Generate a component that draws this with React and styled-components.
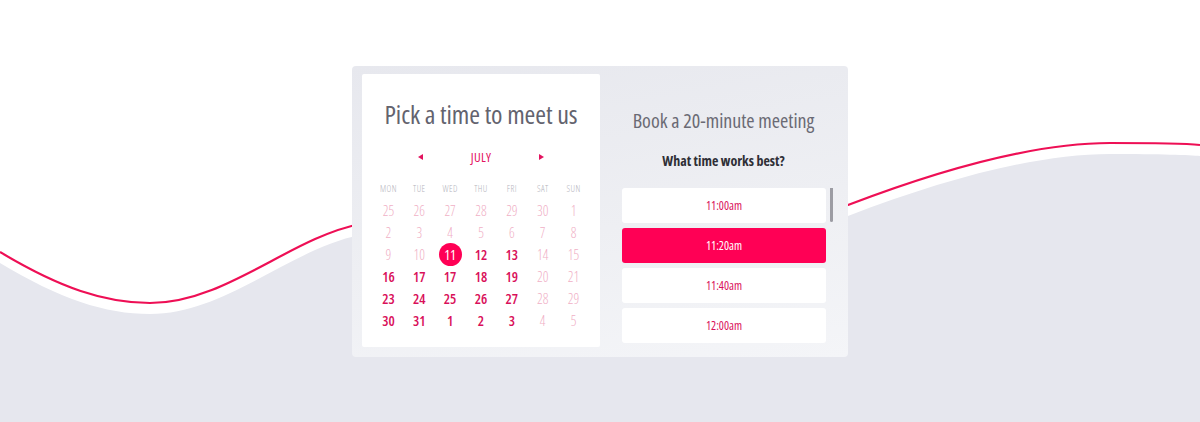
import React from 'react';
import styled, { createGlobalStyle } from 'styled-components';

const GlobalStyle = createGlobalStyle`
  html, body {
    margin: 0;
    padding: 0;
    background: #ffffff;
  }
  body {
    font-family: "Open Sans", "Noto Sans", sans-serif;
    font-stretch: 80%;
  }
`;

const Page = styled.div`
  position: relative;
  width: 100%;
  height: 422px;
  overflow: hidden;
  background: #ffffff;
`;

const Wave = styled.svg`
  position: absolute;
  left: 0;
  top: 0;
  width: 1200px;
  height: 422px;
`;

const Stage = styled.div`
  position: relative;
  z-index: 1;
  display: flex;
  justify-content: center;
  padding-top: 66px;
`;

const Card = styled.div`
  width: 496px;
  height: 291px;
  box-sizing: border-box;
  padding: 8px 10px 10px 10px;
  display: flex;
  border-radius: 4px;
  background: linear-gradient(170deg, #e7e8ee 0%, #eeeff3 55%, #f4f5f8 100%);
`;

const CalendarPanel = styled.div`
  width: 238px;
  flex: none;
  background: #ffffff;
  border-radius: 2px;
  padding: 25px 11px 0 11px;
  box-sizing: border-box;
`;

const Title = styled.h1`
  margin: 0;
  text-align: center;
  white-space: nowrap;
  font-size: 26px;
  line-height: 30px;
  font-weight: 400;
  color: #63636e;
  letter-spacing: -0.1px;
`;

const MonthRow = styled.div`
  display: flex;
  align-items: center;
  justify-content: space-between;
  margin: 18px 45px 0 45px;
  height: 20px;
`;

const Month = styled.span`
  font-size: 13px;
  color: #e3135f;
  letter-spacing: 0.3px;
`;

const Arrow = styled.span`
  width: 0;
  height: 0;
  border-top: 3px solid transparent;
  border-bottom: 3px solid transparent;
  ${({ $dir }) => ($dir === 'left'
    ? 'border-right: 5px solid #e3135f;'
    : 'border-left: 5px solid #e3135f;')}
`;

const Grid = styled.div`
  display: grid;
  grid-template-columns: repeat(7, 1fr);
  margin-top: 15px;
`;

const WeekDay = styled.div`
  text-align: center;
  font-size: 9px;
  line-height: 14px;
  font-weight: 300;
  color: #b4b4bc;
  letter-spacing: 0.4px;
  margin-bottom: 3px;
`;

const Day = styled.div`
  display: flex;
  align-items: center;
  justify-content: center;
  height: 22px;
  font-size: 14px;
  font-weight: ${({ $active }) => ($active ? 600 : 300)};
  color: ${({ $active }) => ($active ? '#d9105a' : '#f0b0c6')};
`;

const Selected = styled.span`
  width: 23px;
  height: 23px;
  border-radius: 50%;
  background: #ff0055;
  color: #ffffff;
  display: flex;
  align-items: center;
  justify-content: center;
  font-weight: 400;
`;

const BookPanel = styled.div`
  flex: 1;
  display: flex;
  flex-direction: column;
  padding-top: 35px;
`;

const BookTitle = styled.h2`
  margin: 0;
  padding-left: 9px;
  text-align: center;
  white-space: nowrap;
  font-size: 20px;
  line-height: 24px;
  font-weight: 400;
  color: #6a6a74;
`;

const Question = styled.h3`
  margin: 19px 0 0 0;
  padding-left: 9px;
  text-align: center;
  font-size: 14px;
  line-height: 18px;
  font-weight: 700;
  color: #2f2f36;
`;

const ListArea = styled.div`
  display: flex;
  gap: 4px;
  margin: 18px 0 0 22px;
  height: 155px;
  overflow: hidden;
`;

const Slots = styled.div`
  width: 204px;
  display: flex;
  flex-direction: column;
  gap: 5px;
`;

const Slot = styled.div`
  flex: none;
  height: 35px;
  border-radius: 3px;
  display: flex;
  align-items: center;
  justify-content: center;
  font-size: 12px;
  background: ${({ $selected }) => ($selected ? '#ff0055' : '#ffffff')};
  color: ${({ $selected }) => ($selected ? '#ffffff' : '#d9105a')};
`;

const ScrollThumb = styled.div`
  width: 3px;
  height: 35px;
  margin-top: -1px;
  border-radius: 2px;
  background: #9c9ca3;
`;

const weekDays = ['MON', 'TUE', 'WED', 'THU', 'FRI', 'SAT', 'SUN'];

const days = [
  [25, 0], [26, 0], [27, 0], [28, 0], [29, 0], [30, 0], [1, 0],
  [2, 0], [3, 0], [4, 0], [5, 0], [6, 0], [7, 0], [8, 0],
  [9, 0], [10, 0], [11, 2], [12, 1], [13, 1], [14, 0], [15, 0],
  [16, 1], [17, 1], [17, 1], [18, 1], [19, 1], [20, 0], [21, 0],
  [23, 1], [24, 1], [25, 1], [26, 1], [27, 1], [28, 0], [29, 0],
  [30, 1], [31, 1], [1, 1], [2, 1], [3, 1], [4, 0], [5, 0],
];

const times = ['11:00am', '11:20am', '11:40am', '12:00am'];

const line = 'M0,252 C60,288 105,303 150,303 C225,303 290,238 360,224 C520,195 700,220 848,205 C950,166 1040,143 1110,143 C1160,143 1190,144 1200,145';
const fill = 'M0,263 C60,299 105,314 150,314 C225,314 290,249 360,235 C520,206 700,231 848,216 C950,177 1040,154 1110,154 C1160,154 1190,155 1200,156 L1200,422 L0,422 Z';

export default function App() {
  return (
    <Page>
      <GlobalStyle />
      <Wave viewBox="0 0 1200 422" preserveAspectRatio="none">
        <path d={fill} fill="#e6e7ee" />
        <path d={line} fill="none" stroke="#ee0f55" strokeWidth="2.2" />
      </Wave>
      <Stage>
        <Card>
          <CalendarPanel>
            <Title>Pick a time to meet us</Title>
            <MonthRow>
              <Arrow $dir="left" />
              <Month>JULY</Month>
              <Arrow $dir="right" />
            </MonthRow>
            <Grid>
              {weekDays.map((d) => <WeekDay key={d}>{d}</WeekDay>)}
              {days.map(([n, state], i) => (
                <Day key={i} $active={state === 1}>
                  {state === 2 ? <Selected>{n}</Selected> : n}
                </Day>
              ))}
            </Grid>
          </CalendarPanel>
          <BookPanel>
            <BookTitle>Book a 20-minute meeting</BookTitle>
            <Question>What time works best?</Question>
            <ListArea>
              <Slots>
                {times.map((t, i) => (
                  <Slot key={t} $selected={i === 1}>{t}</Slot>
                ))}
              </Slots>
              <ScrollThumb />
            </ListArea>
          </BookPanel>
        </Card>
      </Stage>
    </Page>
  );
}
